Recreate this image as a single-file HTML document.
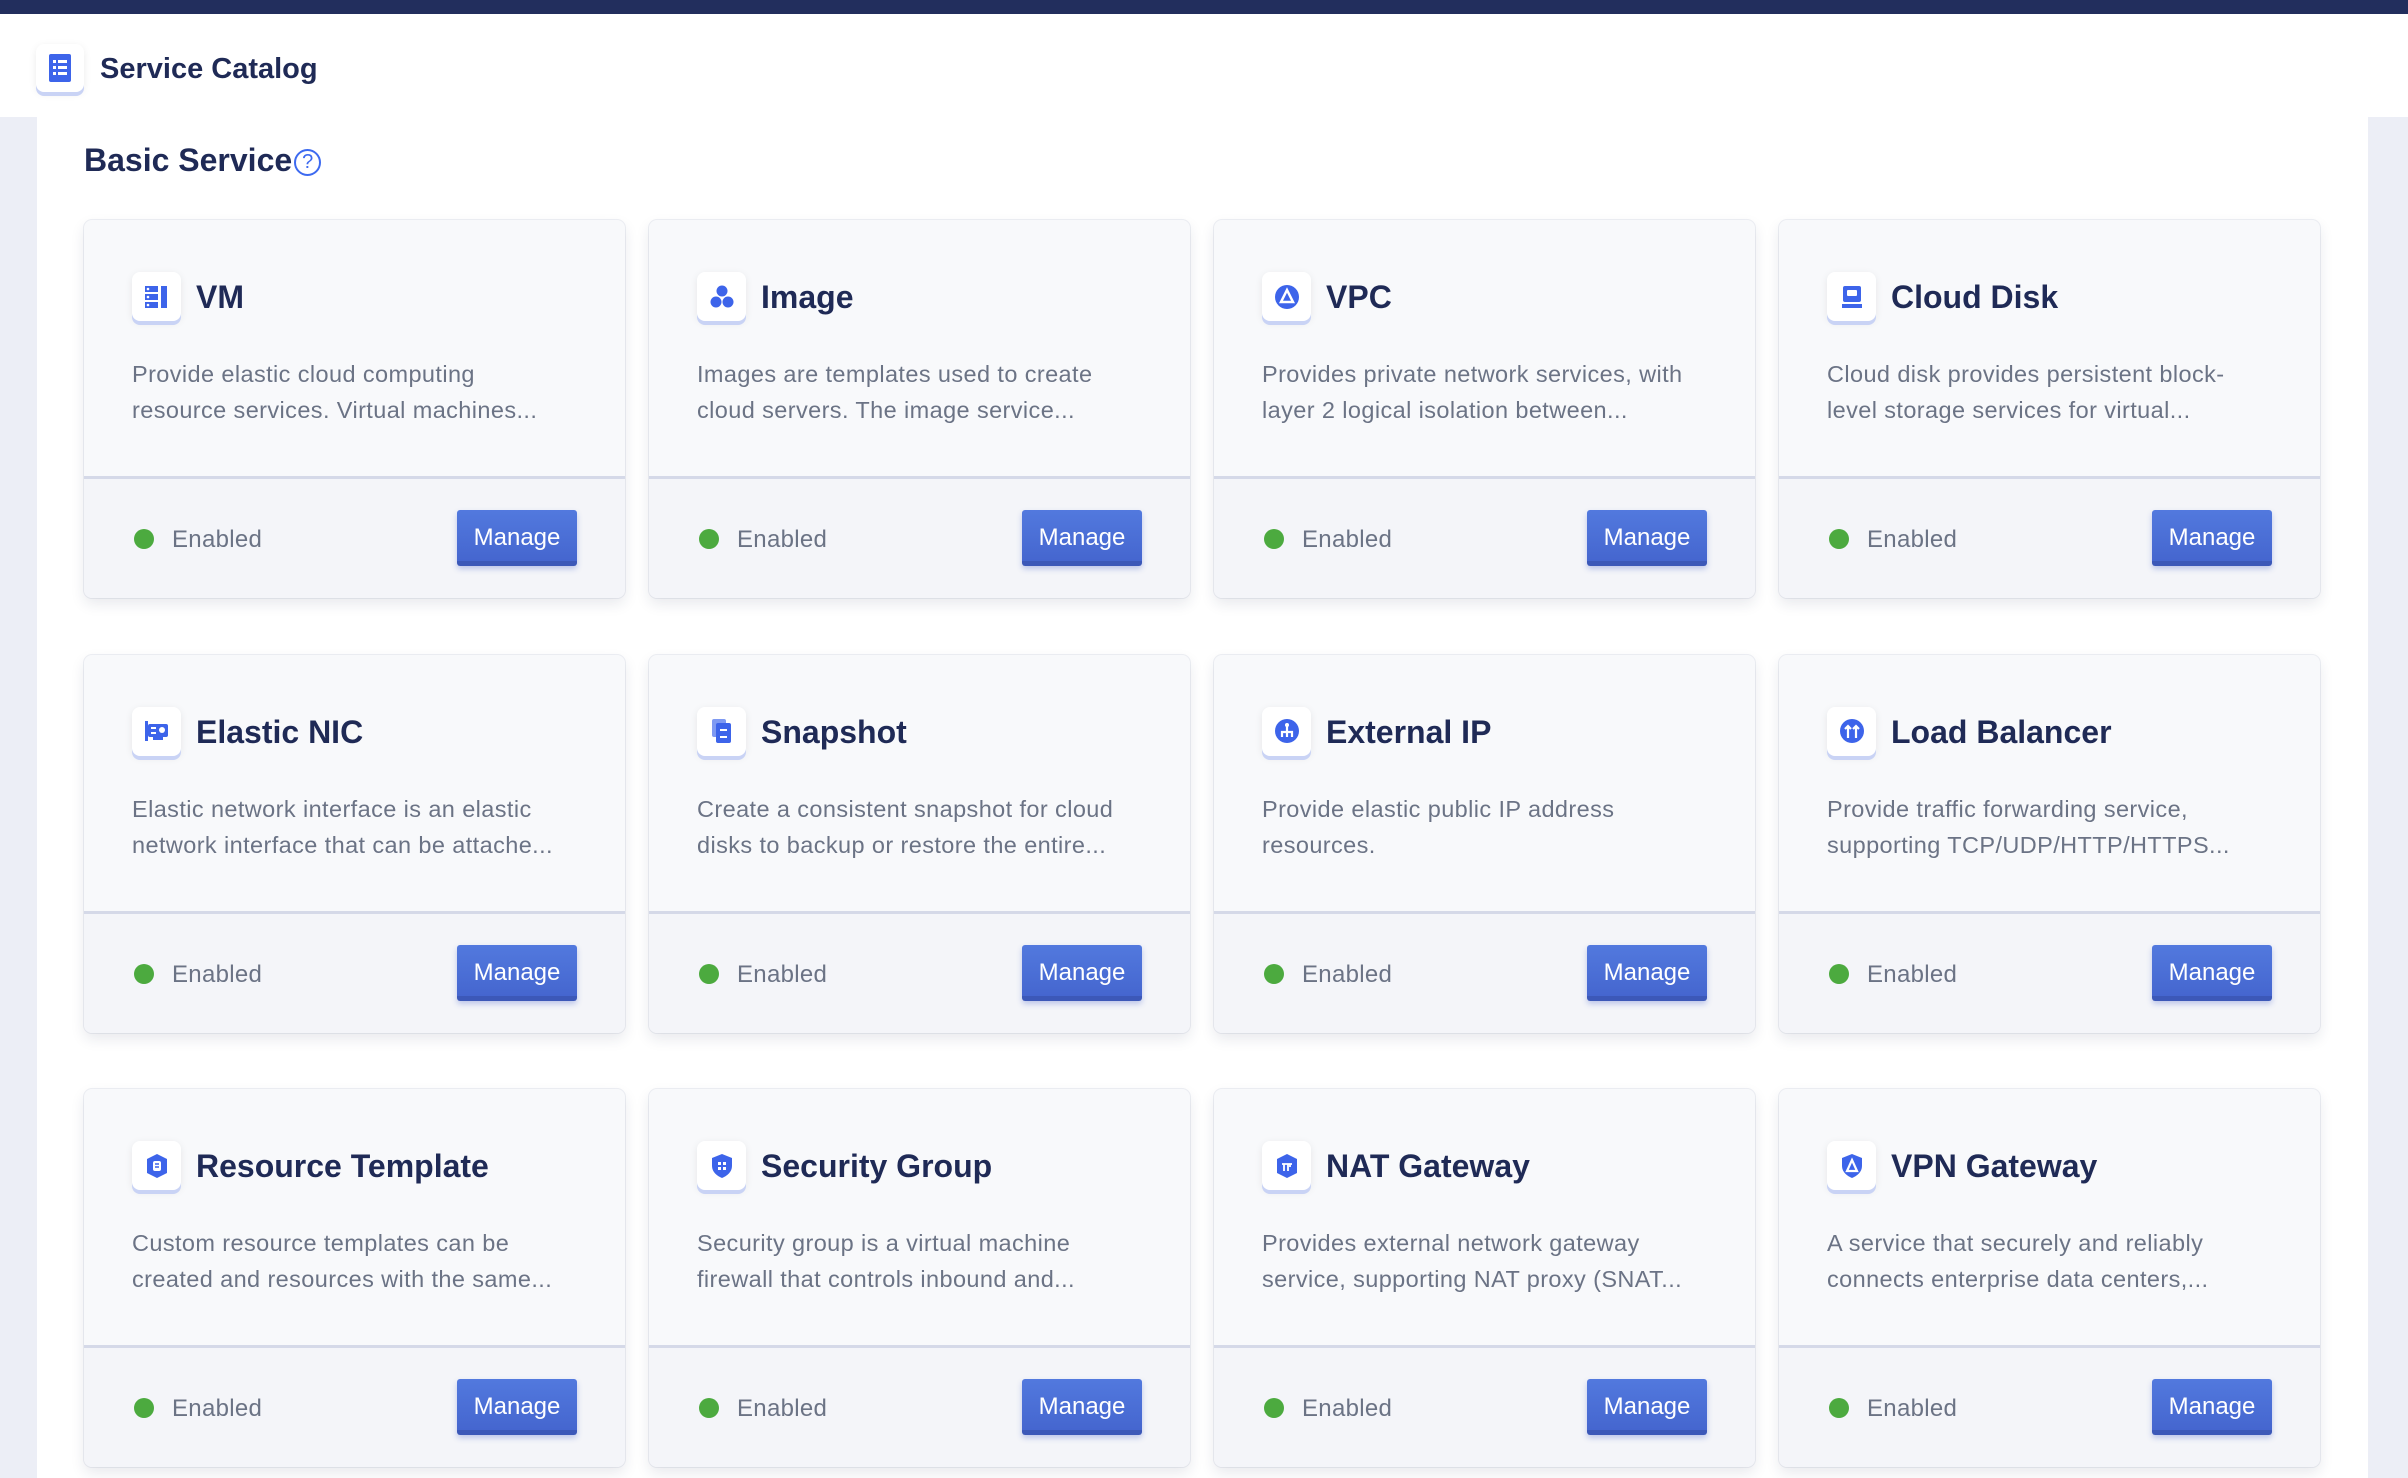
<!DOCTYPE html>
<html><head><meta charset="utf-8">
<style>
*{box-sizing:border-box;margin:0;padding:0}
body{width:2408px;height:1478px;overflow:hidden;background:#eceef6;font-family:"Liberation Sans",sans-serif;position:relative}
.top{position:absolute;left:0;top:0;width:2408px;height:14px;background:#222e5d}
.hdr{position:absolute;left:0;top:14px;width:2408px;height:103px;background:#fff}
.hicon{position:absolute;left:36px;top:30px;width:48px;height:48px;background:#fff;border-radius:8px;box-shadow:0 4px 0 #c9d3f5,0 2px 8px rgba(0,0,0,.08);display:flex;align-items:center;justify-content:center}
.htitle{position:absolute;left:100px;top:39px;font-size:29px;font-weight:bold;color:#1f2a56}
.main{position:absolute;left:37px;top:117px;width:2331px;height:1361px;background:#fff}
.sec{position:absolute;left:84px;top:142px;font-size:32px;font-weight:bold;color:#1f2a56}
.q{display:inline-block;width:27px;height:27px;border:2.5px solid #3d6af0;border-radius:50%;color:#3d6af0;font-size:20px;text-align:center;line-height:22px;font-weight:normal;vertical-align:3px;margin-left:2px}
.card{position:absolute;width:541px;height:378px;background:#f8f9fb;border-radius:8px;box-shadow:0 6px 14px rgba(30,40,80,.10),0 0 0 1px #eef0f4}
.ci{position:absolute;left:48px;top:52px;width:49px;height:49px;background:#fff;border-radius:8px;box-shadow:0 4px 0 #c9d3f5,0 2px 8px rgba(0,0,0,.08);display:flex;align-items:center;justify-content:center}
.ct{position:absolute;left:112px;top:59px;font-size:32px;font-weight:bold;color:#1f2a56}
.cd{position:absolute;left:48px;top:136px;width:428px;font-size:23.5px;line-height:36px;color:#6b7385;letter-spacing:0.4px}
.div{position:absolute;left:0;top:256px;width:541px;height:3px;background:#d5d9e8}
.ft{position:absolute;left:0;top:259px;width:541px;height:119px;background:#f4f5f9;border-radius:0 0 8px 8px}
.dot{position:absolute;left:50px;top:50px;width:20px;height:20px;border-radius:50%;background:#4caa3f}
.en{position:absolute;left:88px;top:47px;font-size:24px;color:#6b7385;letter-spacing:0.3px}
.btn{position:absolute;left:373px;top:31px;width:120px;height:56px;background:linear-gradient(#5279de,#4566cf);border-bottom:5px solid #3c58b8;border-radius:3px;color:#fff;font-size:24px;text-align:center;line-height:56px;box-shadow:0 3px 6px rgba(60,90,200,.3)}
</style></head><body>
<div class="top"></div>
<div class="hdr"><div class="hicon"><svg width="22" height="28" viewBox="0 0 22 28"><rect width="22" height="28" rx="2" fill="#3d64ea"/><g fill="#fff"><rect x="4" y="6" width="3" height="3"/><rect x="9" y="6" width="9" height="3"/><rect x="4" y="12" width="3" height="3"/><rect x="9" y="12" width="9" height="3"/><rect x="4" y="18" width="3" height="3"/><rect x="9" y="18" width="9" height="3"/></g></svg></div><div class="htitle">Service Catalog</div></div>
<div class="main"></div>
<div class="sec">Basic Service<span class="q">?</span></div>

<div id="cards"></div>
<script>
const d=[
["VM","Provide elastic cloud computing resource services. Virtual machines..."],
["Image","Images are templates used to create cloud servers. The image service..."],
["VPC","Provides private network services, with layer 2 logical isolation between..."],
["Cloud Disk","Cloud disk provides persistent block-level storage services for virtual..."],
["Elastic NIC","Elastic network interface is an elastic network interface that can be attache..."],
["Snapshot","Create a consistent snapshot for cloud disks to backup or restore the entire..."],
["External IP","Provide elastic public IP address resources."],
["Load Balancer","Provide traffic forwarding service, supporting TCP/UDP/HTTP/HTTPS..."],
["Resource Template","Custom resource templates can be created and resources with the same..."],
["Security Group","Security group is a virtual machine firewall that controls inbound and..."],
["NAT Gateway","Provides external network gateway service, supporting NAT proxy (SNAT..."],
["VPN Gateway","A service that securely and reliably connects enterprise data centers,..."]];
const ic=[
'<rect x="2" y="3" width="13" height="6" fill="#3d64ea"/><rect x="2" y="11" width="13" height="6" fill="#3d64ea"/><rect x="2" y="19" width="13" height="6" fill="#3d64ea"/><rect x="18" y="3" width="6" height="22" fill="#3d64ea"/><circle cx="5" cy="6" r="1.3" fill="#fff"/><circle cx="5" cy="14" r="1.3" fill="#fff"/><circle cx="5" cy="22" r="1.3" fill="#fff"/>',
'<circle cx="14" cy="8" r="5.5" fill="#3d64ea"/><circle cx="8" cy="19" r="5.5" fill="#3d64ea"/><circle cx="20" cy="19" r="5.5" fill="#3d64ea"/>',
'<circle cx="14" cy="14" r="12" fill="#3d64ea"/><path d="M14 7 L20 19 H8 Z" fill="none" stroke="#fff" stroke-width="2.5"/>',
'<rect x="5" y="3" width="18" height="16" rx="2" fill="#3d64ea"/><rect x="9" y="7" width="10" height="6" rx="1" fill="#fff"/><rect x="4" y="21" width="20" height="4" fill="#3d64ea"/>',
'<rect x="2" y="4" width="3" height="20" fill="#3d64ea"/><rect x="5" y="7" width="20" height="13" rx="2" fill="#3d64ea"/><rect x="8" y="10" width="5" height="2" fill="#fff"/><rect x="8" y="15" width="5" height="2" fill="#fff"/><circle cx="19" cy="13" r="3" fill="#fff"/><rect x="10" y="20" width="10" height="3" fill="#3d64ea"/>',
'<rect x="4" y="2" width="14" height="18" rx="2" fill="#7f9af2"/><rect x="8" y="6" width="15" height="20" rx="2" fill="#3d64ea"/><path d="M12 13h7M12 20h7" stroke="#fff" stroke-width="2"/>',
'<circle cx="14" cy="14" r="12" fill="#3d64ea"/><path d="M14 8v6M9 20v-5h10v5M14 14v6" stroke="#fff" stroke-width="2.2" fill="none"/><circle cx="14" cy="8" r="2" fill="#fff"/>',
'<circle cx="14" cy="14" r="12" fill="#3d64ea"/><path d="M10 21V9M7 12l3-3 3 3M18 21V9M15 12l3-3 3 3" stroke="#fff" stroke-width="2.2" fill="none"/>',
'<path d="M14 2 L24 7 V21 L14 26 L4 21 V7 Z" fill="#3d64ea"/><rect x="10" y="9" width="8" height="10" rx="2" fill="#fff"/><path d="M12 12h4M12 15h4" stroke="#3d64ea" stroke-width="1.5"/>',
'<path d="M14 2 L24 6 V14 C24 20 19 24 14 26 C9 24 4 20 4 14 V6 Z" fill="#3d64ea"/><g fill="#fff"><rect x="10" y="10" width="3" height="3"/><rect x="15" y="10" width="3" height="3"/><rect x="10" y="15" width="3" height="3"/><rect x="15" y="15" width="3" height="3"/></g>',
'<path d="M14 2 L24 7 V21 L14 26 L4 21 V7 Z" fill="#3d64ea"/><path d="M9 12h10M11 12v7M15 12v7M17 12v3" stroke="#fff" stroke-width="1.8" fill="none"/>',
'<path d="M14 2 L24 6 V14 C24 20 19 24 14 26 C9 24 4 20 4 14 V6 Z" fill="#3d64ea"/><path d="M14 8 L19 19 H9 Z" fill="none" stroke="#fff" stroke-width="2.2"/>'];
let h='';
d.forEach((c,i)=>{const x=84+(i%4)*565,y=220+Math.floor(i/4)*434.5;
h+=`<div class="card" style="left:${x}px;top:${y}px"><div class="ci"><svg width="28" height="28" viewBox="0 0 28 28">${ic[i]}</svg></div><div class="ct">${c[0]}</div><div class="cd">${c[1]}</div><div class="ft"><div class="dot"></div><div class="en">Enabled</div><div class="btn">Manage</div></div><div class="div"></div></div>`;});
document.getElementById('cards').innerHTML=h;
</script>
</body></html>
